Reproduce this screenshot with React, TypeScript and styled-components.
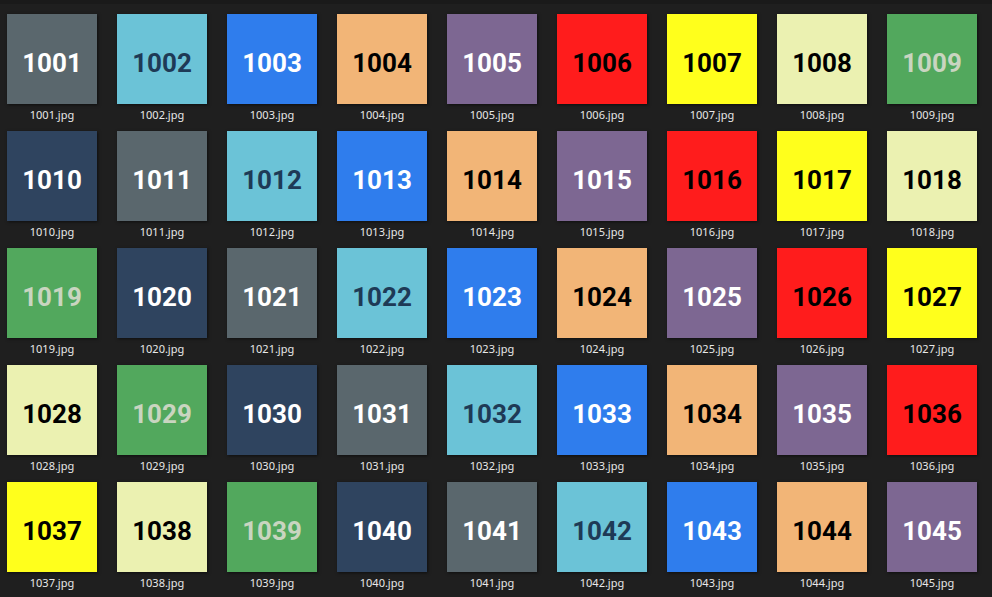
import React from "react";
import styled, { createGlobalStyle } from "styled-components";

const Global = createGlobalStyle`
  html, body { margin: 0; padding: 0; background: #1f1f1f; }
  body { font-family: "Noto Sans", "Open Sans", sans-serif; }
`;

const Page = styled.div`
  width: 992px;
  height: 597px;
  overflow: hidden;
  background: #1f1f1f;
  display: flex;
  flex-direction: column;
`;

const TopStrip = styled.div`
  height: 4px;
  background: #1a1a1a;
  flex: none;
`;

const Grid = styled.div`
  display: grid;
  grid-template-columns: repeat(9, 90px);
  column-gap: 20px;
  grid-auto-rows: 117px;
  padding: 10px 0 0 7px;
`;

const Cell = styled.div`
  display: flex;
  flex-direction: column;
  align-items: center;
`;

const Thumb = styled.div<{ $bg: string; $fg: string }>`
  width: 90px;
  height: 90px;
  flex: none;
  background: ${(p) => p.$bg};
  color: ${(p) => p.$fg};
  box-shadow: 1px 1px 3px rgba(0, 0, 0, 0.55);
  display: flex;
  align-items: center;
  justify-content: center;
  font-family: Roboto, "Noto Sans", sans-serif;
  font-weight: 700;
  font-size: 26px;
  line-height: 1;
  padding-top: 7px;
  box-sizing: border-box;
`;

const Label = styled.div`
  margin-top: 3px;
  font-size: 11px;
  line-height: 15px;
  color: #e8e8e8;
  white-space: nowrap;
`;

const palette: { bg: string; fg: string }[] = [
  { bg: "#5a676d", fg: "#ffffff" },
  { bg: "#6bc3d7", fg: "#1e3a56" },
  { bg: "#2f7ded", fg: "#ffffff" },
  { bg: "#f2b577", fg: "#000000" },
  { bg: "#7d6792", fg: "#ffffff" },
  { bg: "#ff1c1c", fg: "#000000" },
  { bg: "#ffff1c", fg: "#000000" },
  { bg: "#ebf1b1", fg: "#000000" },
  { bg: "#52a85d", fg: "#c9d5c0" },
  { bg: "#2f445f", fg: "#ffffff" },
];

const items = Array.from({ length: 45 }, (_, i) => 1001 + i);

export default function App() {
  return (
    <Page>
      <Global />
      <TopStrip />
      <Grid>
        {items.map((n, i) => {
          const c = palette[i % 10];
          return (
            <Cell key={n}>
              <Thumb $bg={c.bg} $fg={c.fg}>{n}</Thumb>
              <Label>{n}.jpg</Label>
            </Cell>
          );
        })}
      </Grid>
    </Page>
  );
}
